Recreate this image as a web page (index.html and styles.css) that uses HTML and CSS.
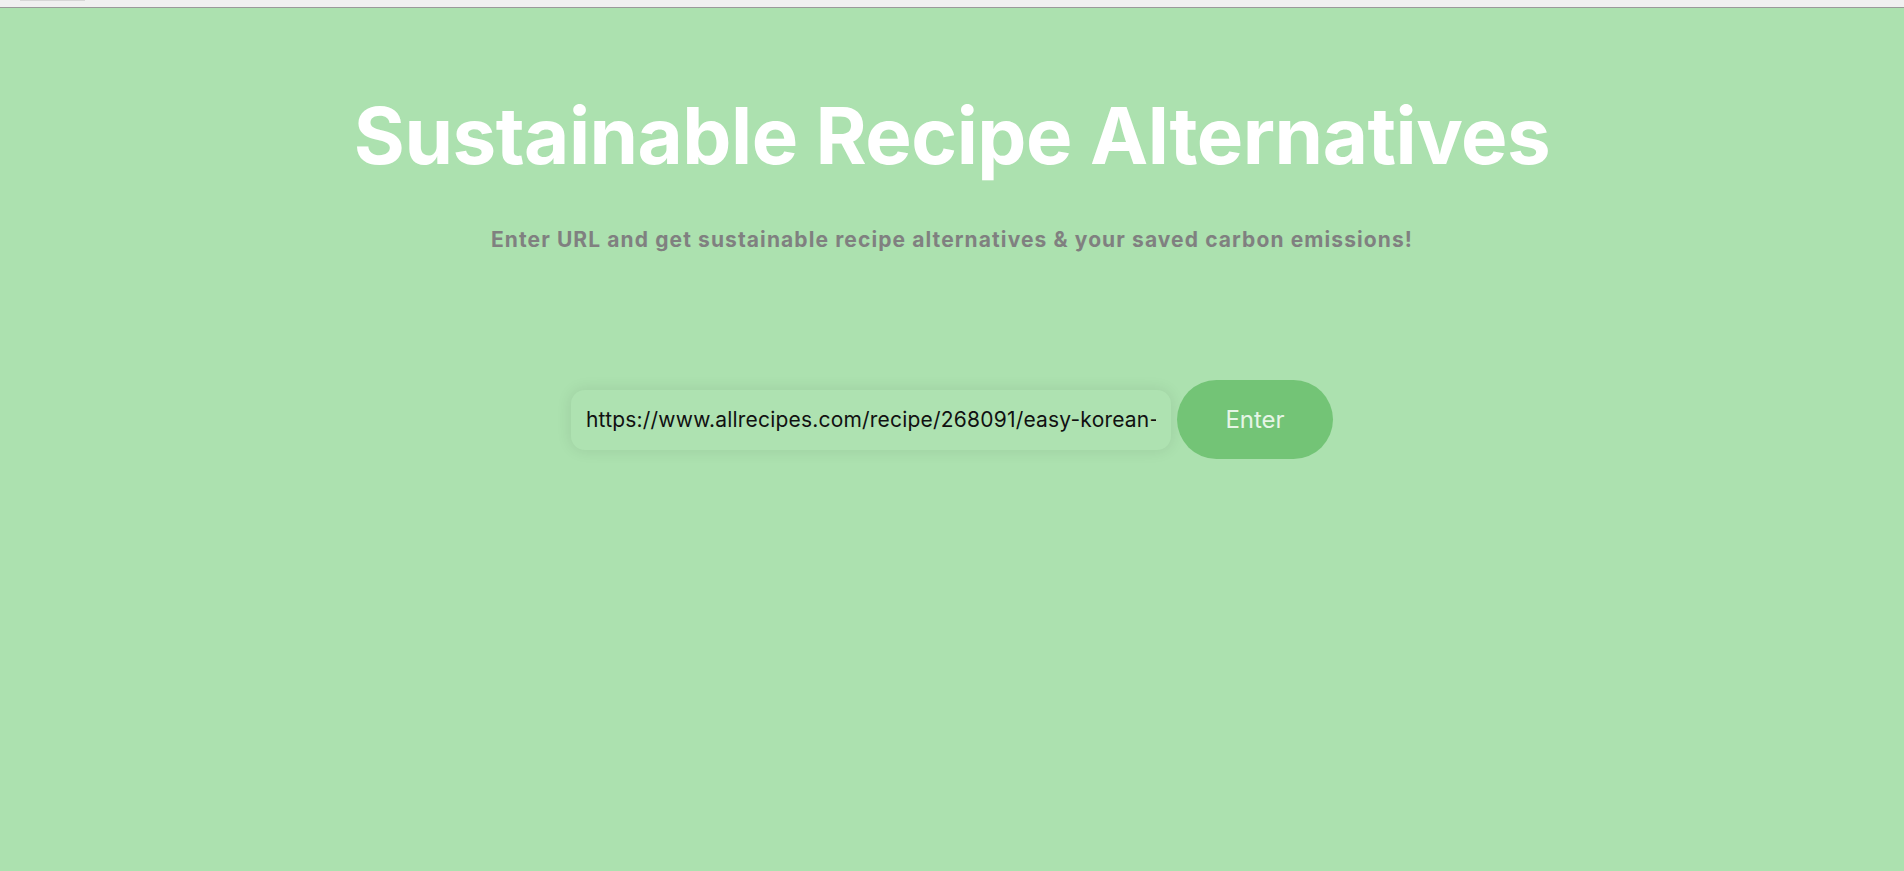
FILE: index.html
```html
<!DOCTYPE html>
<html lang="en">
<head>
    <meta charset="UTF-8">
    <meta name="viewport" content="width=device-width, initial-scale=1.0">
    <title>Sustainable Recipe Alternatives</title>
    <link rel="stylesheet" href="styles.css">
</head>
<body>
    <div class="top-strip">
        <div class="tab"></div>
    </div>

    <div class="main">
        <h1>Sustainable Recipe Alternatives</h1>
        <p class="subtitle">Enter URL and get sustainable recipe alternatives &amp; your saved carbon emissions!</p>

        <form class="url-form" onsubmit="return false;">
            <input type="text" class="url-input" value="https://www.allrecipes.com/recipe/268091/easy-korean-ground-beef-bowl/">
            <button type="submit" class="enter-btn">Enter</button>
        </form>
    </div>
</body>
</html>
```

FILE: styles.css
```css
body {
    margin: 0;
    font-family: "Inter", "Noto Sans", sans-serif;
    background-color: #ace1af;
    min-height: 100vh;
}
.top-strip {
    height: 7px;
    background-color: #f0f0f0;
    border-bottom: 1px solid #9a9a9a;
    position: relative;
}
.tab {
    position: absolute;
    left: 20px;
    top: 0;
    width: 65px;
    height: 1px;
    background-color: #d6d6d6;
}
.main {
    text-align: center;
    padding-top: 80px;
}
h1 {
    font-size: 78px;
    font-weight: 700;
    color: #ffffff;
    margin: 0;
    letter-spacing: -0.5px;
}
.subtitle {
    font-size: 21px;
    font-weight: 700;
    color: #808080;
    letter-spacing: 1.1px;
    margin: 44px 0 0;
}
.url-form {
    display: flex;
    justify-content: center;
    align-items: center;
    gap: 6px;
    margin-top: 128px;
}
.url-input {
    width: 600px;
    height: 60px;
    box-sizing: border-box;
    padding: 0 15px;
    font-family: inherit;
    font-size: 21px;
    letter-spacing: 0.2px;
    color: #111;
    background-color: #aee2b1;
    border: none;
    border-radius: 14px;
    outline: none;
    box-shadow: 0 0 16px rgba(0, 0, 0, 0.09);
}
.enter-btn {
    width: 156px;
    height: 79px;
    font-family: inherit;
    font-size: 24px;
    color: #e6f5e6;
    background-color: #73c476;
    border: none;
    border-radius: 40px;
    cursor: pointer;
}
```
